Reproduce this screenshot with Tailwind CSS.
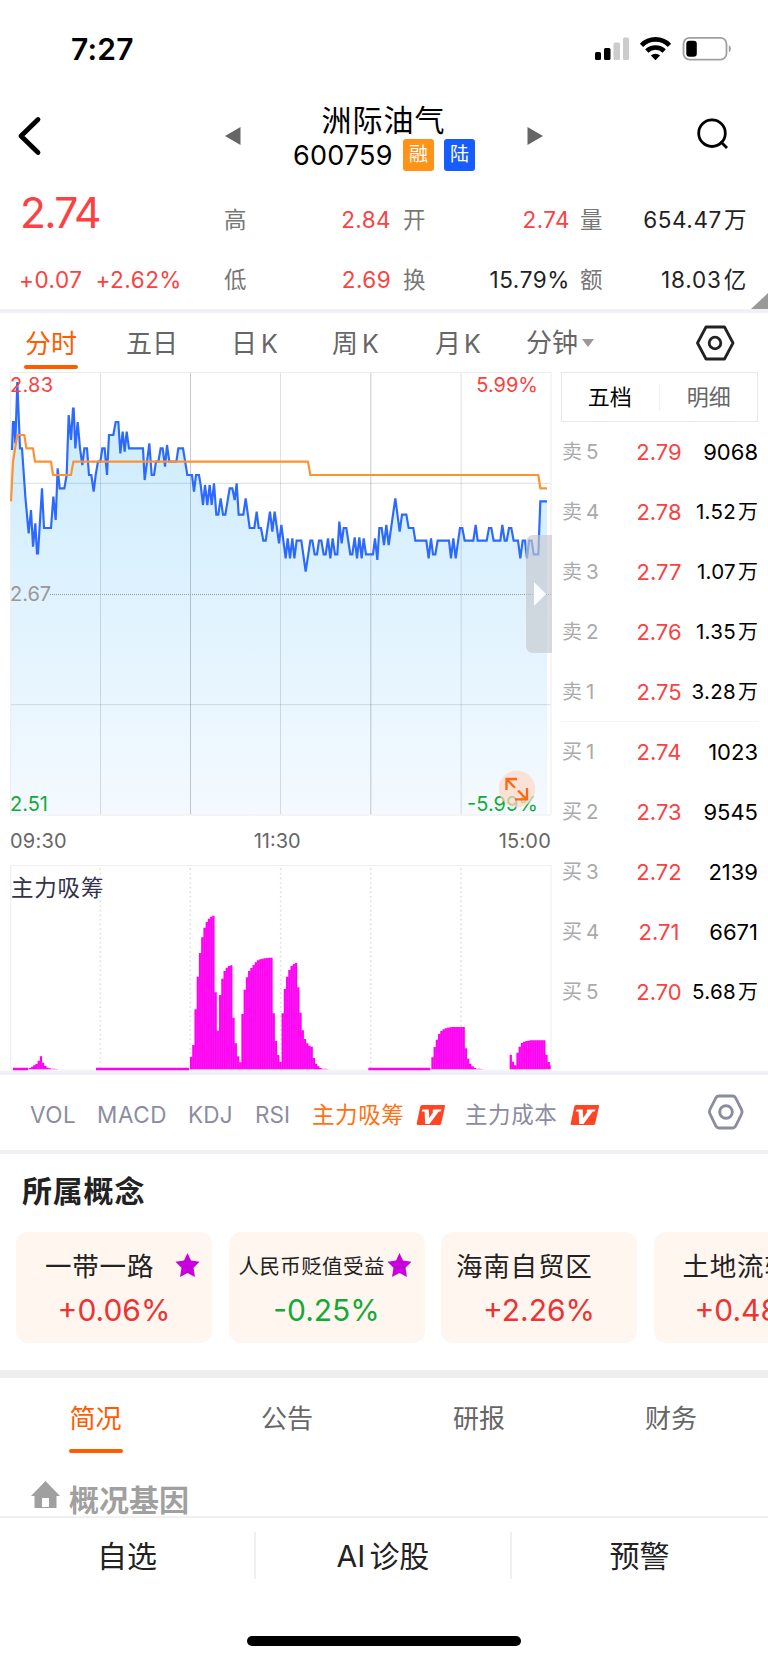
<!DOCTYPE html>
<html lang="zh-CN">
<head>
<meta charset="utf-8">
<title>洲际油气 600759</title>
<script src="https://cdn.jsdelivr.net/npm/@tailwindcss/browser@4"></script>
</head>
<body class="bg-white">
<div class="w-[768px] h-[1663px] overflow-hidden bg-white flex flex-col whitespace-nowrap text-[#222] font-['Inter','Noto_Sans_CJK_SC',sans-serif]">

  <!-- status bar -->
  <div class="h-[98px] shrink-0 flex items-center justify-between pl-[71px] pr-[36px]">
    <div class="text-[30px] leading-[30px] font-semibold text-black tracking-[0.2px]">7:27</div>
    <svg width="138" height="26" viewBox="594 36 138 26">
      <g fill="#000"><rect x="595" y="52" width="6" height="8" rx="1.5"/><rect x="604" y="48" width="6.500" height="12" rx="1.500"/></g>
      <g fill="#ccc"><rect x="613.500" y="42.500" width="6.500" height="17.500" rx="1.500"/><rect x="623" y="37.500" width="6" height="22.500" rx="1.500"/></g>
      <g fill="none" stroke="#000" stroke-width="4.600"><path d="M641.500 45.300a19.500 19.500 0 0 1 28 0"/><path d="M646.800 51a12.500 12.500 0 0 1 17.400 0"/></g>
      <path d="M655.500 60.300l-4.600-4.700a6.600 6.600 0 0 1 9.200 0z" fill="#000"/>
      <rect x="683.500" y="37.900" width="43" height="21.700" rx="6" fill="none" stroke="#a0a0a0" stroke-width="1.800"/>
      <rect x="686.300" y="40.800" width="10.500" height="16" rx="3.200" fill="#000"/>
      <path d="M728.800 45.300c2.800 1 2.800 6 0 7z" fill="#a0a0a0"/>
    </svg>
  </div>

  <!-- header -->
  <div class="h-[88px] shrink-0 flex">
    <div class="w-[220px]"><svg width="60" height="76" viewBox="0 98 60 76"><path d="M38 119.500L21 136l17 16.500" fill="none" stroke="#000" stroke-width="4.800" stroke-linecap="round" stroke-linejoin="round"/></svg></div>
    <svg width="25" height="76" viewBox="220 98 25 76"><path d="M240.500 127v18L225 136z" fill="#666"/></svg>
    <div class="w-[278px] text-black flex flex-col items-center pt-[6px]">
      <div class="text-[30px] leading-[32px] tracking-[1px] -ml-[1px]">洲际油气</div>
      <div class="flex items-center mt-[3px] h-[32px]">
        <div class="text-[27px] tracking-[0.2px] w-[110px] pt-[2px]">600759</div>
        <div class="w-[31px] h-[32px] rounded-[3px] bg-[#ff9318] text-white text-[19px] leading-[32px] text-center">融</div>
        <div class="ml-[10px] w-[31px] h-[32px] rounded-[3px] bg-[#175cff] text-white text-[19px] leading-[32px] text-center">陆</div>
      </div>
    </div>
    <svg width="245" height="76" viewBox="523 98 245 76"><path d="M527.500 127v18L543 136z" fill="#666"/><circle cx="712" cy="133.200" r="13.300" fill="none" stroke="#000" stroke-width="2.800"/><path d="M720.500 141.500l6.500 6.500" stroke="#000" stroke-width="2.800"/></svg>
  </div>

  <!-- quote summary -->
  <div class="h-[123px] shrink-0 relative text-[22.5px] leading-[30px]">
    <div class="h-[63px] flex items-center text-[#fa4242]">
      <div class="pl-[20px] w-[224px] text-[42.5px] leading-[54px] tracking-[-1.7px] -mt-[10px]">2.74</div>
      <div class="w-[80px] text-[#777] pt-[4px]">高</div><div class="w-[87px] text-right pt-[4px] tracking-[0.4px]">2.84</div>
      <div class="pl-[12px] w-[42px] text-[#777] pt-[4px]">开</div><div class="w-[137px] text-right pt-[4px] tracking-[0.4px]">2.74</div>
      <div class="pl-[10px] w-[42px] text-[#777] pt-[4px]">量</div><div class="w-[135px] text-right pt-[4px] text-[#222] tracking-[0.6px]">654.47<span class="ml-[2px]">万</span></div>
    </div>
    <div class="h-[60px] flex items-center text-[#fa4242] pt-[1px]">
      <div class="pl-[19px] w-[224px] tracking-[0.5px]">+0.07<span class="ml-[13px]">+2.62%</span></div>
      <div class="w-[80px] text-[#777]">低</div><div class="w-[87px] text-right tracking-[0.4px]">2.69</div>
      <div class="pl-[12px] w-[42px] text-[#777]">换</div><div class="w-[137px] text-right text-[#222] tracking-[0.6px]">15.79%</div>
      <div class="pl-[10px] w-[42px] text-[#777]">额</div><div class="w-[135px] text-right text-[#222] tracking-[0.8px]">18.03<span class="ml-[2px]">亿</span></div>
    </div>
    <svg class="absolute right-0 bottom-0" width="17" height="16" viewBox="0 0 17 16"><path d="M0 16L17 0v16z" fill="#999"/></svg>
  </div>
  <div class="h-[4px] shrink-0 bg-[#f0f0f6]"></div>

  <!-- period tabs -->
  <div class="h-[59px] shrink-0 flex text-[26px] leading-[62px] text-[#666]">
    <div class="w-[126px] pl-[24px] text-[#ff5c00]"><div class="w-[54px] h-[52px] text-center">分时</div><div class="w-[54px] h-[4px] rounded-full bg-[#ff5c00]"></div></div>
    <div class="w-[106px]">五日</div>
    <div class="w-[101px] -ml-[1px] mr-[1px]">日<span class="ml-[4px] text-[25px]">K</span></div>
    <div class="w-[102px] -ml-[1px] mr-[1px]">周<span class="ml-[4px] text-[25px]">K</span></div>
    <div class="w-[91px]">月<span class="ml-[3px] text-[25px]">K</span></div>
    <div class="w-[168px] flex items-center">分钟<svg class="ml-[4px]" width="12" height="8"><path d="M0 0h12L6 8z" fill="#999"/></svg></div>
    <svg class="mt-[11px]" width="42" height="38" viewBox="694 324 42 38"><path d="M706 327h18.500l8.500 16-8.500 16H706l-8.500-16z" fill="none" stroke="#222" stroke-width="2.800" stroke-linejoin="round"/><circle cx="715" cy="343" r="5.800" fill="none" stroke="#222" stroke-width="2.800"/></svg>
  </div>

  <!-- charts and order book -->
  <div class="h-[699px] shrink-0 flex pl-[10px]">
    <div class="w-[551px] flex flex-col text-[20px] leading-[24px]">
      <div class="relative h-[444px]">
        <svg class="block" width="542" height="444" viewBox="30 216 1626 1332">
          <defs><linearGradient id="area" x1="0" y1="0" x2="0" y2="1"><stop offset="0" stop-color="#c9ecfe"/><stop offset=".35" stop-color="#d9f0fe"/><stop offset="1" stop-color="#f4faff"/></linearGradient></defs>
          <path id="fill" fill="url(#area)"/>
          <g fill="none" stroke="#3c5064" stroke-opacity=".18" stroke-width="3"><path d="M301.500 217V1544M841.500 217V1544M1383.500 217V1544M32 550H1653M32 1214H1653"/><path d="M571.500 217V1544M1112.500 217V1544" stroke-opacity=".3"/></g>
          <path d="M32 217.500H1653V1545H32z" fill="none" stroke="#ececec" stroke-width="3"/>
          <path d="M150 883.500H1653" stroke="#8e9ba4" stroke-width="3" stroke-dasharray="3 3"/>
          <path id="price" fill="none" stroke="#2b69ff" stroke-width="6.500" stroke-linejoin="miter"/>
          <path id="avg" fill="none" stroke="#ff9130" stroke-width="6.500" stroke-linejoin="round"/>
        </svg>
        <div class="absolute left-0 top-[1px] text-[#fa4242] tracking-[0.3px]">2.83</div>
        <div class="absolute right-[23px] top-[1px] text-[#fa4242]">5.99%</div>
        <div class="absolute left-0 top-[210px] text-[#999]">2.67</div>
        <div class="absolute left-0 top-[420px] text-[#15aa38]">2.51</div>
        <div class="absolute right-[23px] top-[420px] text-[#15aa38]">-5.99%</div>
        <div class="absolute right-[9px] top-[163px] w-[26px] h-[118px] rounded-l-[7px] bg-[#c5c8ce]/65 flex items-center pl-[8px]"><svg width="13" height="24"><path d="M0 0l12 12L0 24z" fill="#fafdff"/></svg></div>
        <svg class="absolute left-[488px] top-[398px]" width="38" height="38" viewBox="498 770 38 38"><circle cx="517" cy="789" r="18.300" fill="#ffd7c8" fill-opacity=".72"/><path d="M506.500 790v-11H517M506.500 779l8.500 8.800M518 790.500l8.500 8.800M527 788v11.300h-12" fill="none" stroke="#fa6a14" stroke-width="2.300"/></svg>
      </div>
      <div class="h-[49px] w-[541px] flex justify-between items-center text-[#666]"><span class="tracking-[0.2px]">09:30</span><span class="-ml-[11px]">11:30</span><span class="tracking-[0.2px]">15:00</span></div>
      <div class="relative h-[206px]">
        <svg class="block" width="542" height="206" viewBox="30 45 1626 618">
          <path d="M32 660V46.500H1653V660z" fill="none" stroke="#f0f0f2" stroke-width="3.500"/>
          <path d="M301 55V655M571 55V655M842 55V655M1112 55V655M1383 55V655" stroke="#e0e0e0" stroke-width="5" stroke-dasharray="5 8.800"/>
          <path id="bars" fill="#ff00f2"/>
          <path id="seams" stroke="#ff55f6" stroke-width="1" fill="none"/>
        </svg>
        <div class="absolute left-[1px] top-[11px] text-[22.5px] tracking-[0.8px] text-[#33334a]">主力吸筹</div>
      </div>
    </div>
    <div class="w-[197px]">
      <div class="h-[50px] border border-[#e8e8e8] flex items-center text-[22px]"><div class="w-[97px] text-center text-black pr-[1px]">五档</div><div class="w-[2px] h-[27px] bg-[#f0f0f0]"></div><div class="w-[97px] text-center text-[#666]">明细</div></div>
      <div id="book" class="text-[22px] leading-[60px]"></div>
    </div>
  </div>
  <div class="h-[4px] shrink-0 bg-[#f0f0f6]"></div>

  <!-- indicators -->
  <div class="h-[75px] shrink-0 flex items-center text-[22.5px] text-[#8c8ca1] pt-[4px]">
    <div class="pl-[30px] w-[97px] tracking-[0.5px]">VOL</div><div class="w-[91px] tracking-[0.6px]">MACD</div><div class="w-[67px] tracking-[0.2px]">KDJ</div><div class="w-[57px]">RSI</div>
    <div class="w-[104px] text-[#ff7214] tracking-[0.6px]">主力吸筹</div>
    <svg width="49" height="22" viewBox="0 0 49 22"><path d="M6 1h22q1.400 0 1 1.400l-3.800 17q-.4 1.600-2 1.600H1.800Q.4 21 .7 19.600l3.600-17Q4.600 1 6 1z" fill="#ff4524"/><path d="M6.500 5.500h6.200l.6 8.500 4.200-6.500h-1.200l1-2h8.200l-1 2h-1.700L13.500 20H9.200l-.6-12.500H5.700z" fill="#fff"/></svg>
    <div class="w-[105px] tracking-[0.6px]">主力成本</div>
    <svg width="30" height="22" viewBox="0 0 30 22"><path d="M6 1h22q1.400 0 1 1.400l-3.800 17q-.4 1.600-2 1.600H1.800Q.4 21 .7 19.600l3.600-17Q4.600 1 6 1z" fill="#ff4524"/><path d="M6.500 5.500h6.200l.6 8.500 4.200-6.500h-1.200l1-2h8.200l-1 2h-1.700L13.500 20H9.200l-.6-12.500H5.700z" fill="#fff"/></svg>
    <svg class="ml-[107px] -mt-[5px]" width="38" height="38" viewBox="0 0 38 38"><path d="M12 3h13.500q2 0 3 1.700l6 11.800q1.200 2.300 0 4.600l-6 12.200q-1 1.700-3 1.700H12q-2 0-3-1.700L3 21q-1.200-2.300 0-4.600L9 4.700Q10 3 12 3z" fill="none" stroke="#8c8ca1" stroke-width="2.800"/><circle cx="19" cy="19" r="6.300" fill="none" stroke="#8c8ca1" stroke-width="2.900"/></svg>
  </div>
  <div class="h-[4px] shrink-0 bg-[#f0f0f6]"></div>

  <!-- concepts -->
  <div class="h-[78px] shrink-0 pl-[22px] pt-[14px] text-[30px] leading-[46px] font-bold tracking-[0.8px]">所属概念</div>
  <div class="h-[138px] shrink-0 flex gap-x-[16.5px] pl-[16px]">
    <div class="w-[196px] h-[111px] shrink-0 rounded-[12px] bg-[#fff6f0] pt-[17px]">
      <div class="h-[36px] flex items-center"><div class="w-[159px] pl-[29px] text-[26.5px] tracking-[0.8px]">一带一路</div><svg class="-mt-[4px]" width="25" height="24" viewBox="0 0 24 24"><path d="M12 0l3.500 7.500L24 8.800l-6 6L19.500 24 12 20l-7.500 4L6 14.800l-6-6 8.500-1.300z" fill="#c800dc"/></svg></div>
      <div class="pt-[7px] text-center text-[30px] leading-[36px] text-[#eb3434]">+0.06%</div>
    </div>
    <div class="w-[196px] h-[111px] shrink-0 rounded-[12px] bg-[#fff6f0] pt-[17px]">
      <div class="h-[36px] flex items-center"><div class="w-[158px] pl-[10px] text-[20.500px] tracking-[0.4px]">人民币贬值受益</div><svg class="-mt-[4px]" width="25" height="24" viewBox="0 0 24 24"><path d="M12 0l3.500 7.500L24 8.800l-6 6L19.500 24 12 20l-7.500 4L6 14.800l-6-6 8.500-1.300z" fill="#c800dc"/></svg></div>
      <div class="pt-[7px] text-center text-[30px] leading-[36px] text-[#15aa38]">-0.25%</div>
    </div>
    <div class="w-[196px] h-[111px] shrink-0 rounded-[12px] bg-[#fff6f0] pt-[17px]">
      <div class="h-[36px] flex items-center pl-[15px] text-[26.5px] tracking-[0.8px]">海南自贸区</div>
      <div class="pt-[7px] text-center text-[30px] leading-[36px] text-[#eb3434]">+2.26%</div>
    </div>
    <div class="w-[196px] h-[111px] shrink-0 rounded-[12px] bg-[#fff6f0] pt-[17px]">
      <div class="h-[36px] flex items-center pl-[29px] text-[26.5px] tracking-[0.8px]">土地流转</div>
      <div class="pt-[7px] text-center text-[30px] leading-[36px] text-[#eb3434]">+0.48%</div>
    </div>
  </div>
  <div class="h-[8px] shrink-0 bg-[#eee]"></div>

  <!-- info tabs -->
  <div class="h-[98px] shrink-0 grid grid-cols-4 text-[26px] leading-[82px] text-[#666] text-center">
    <div class="flex flex-col items-center text-[#ff5c00]"><div class="h-[71px] -ml-[1px]">简况</div><div class="w-[54px] h-[4px] rounded-full bg-[#ff5c00]"></div></div>
    <div class="-ml-[2px]">公告</div><div class="-ml-[2px]">研报</div><div class="-ml-[2px]">财务</div>
  </div>
  <div class="h-[40px] shrink-0 flex pl-[31px] text-[#a0a0a0]">
    <svg class="mt-[5px]" width="30" height="28" viewBox="0 0 30 28"><path fill-rule="evenodd" d="M14.500 0L29 15h-3.500v12h-22V15H0zM11 17V26h7V17z" fill="#a0a0a0"/></svg>
    <div class="pl-[8px] text-[30px] leading-[48px] font-bold">概况基因</div>
  </div>

  <!-- bottom actions -->
  <div class="h-[147px] shrink-0 border-t-2 border-[#f0f0f0] flex flex-col items-center bg-white">
    <div class="w-full h-[118px] pt-[14px] grid grid-cols-3 text-center text-[30px] leading-[48px]">
      <div class="h-[47px] border-r-2 border-[#f0f0f0]">自选</div><div class="h-[47px] border-r-2 border-[#f0f0f0]">AI<span class="ml-[4px]">诊股</span></div><div class="h-[47px] -ml-[1px]">预警</div>
    </div>
    <div class="w-[274px] h-[10px] rounded-full bg-black"></div>
  </div>
</div>

<script>
// Chart coordinates are in thirds of a pixel.
const price = `36,450 39,366 42,366 46,430 52,246 60,445 66,445 76,590 86,700 93,630 99,740 106,670 111,760 114,760 126,565 132,684 153,684 160,590 167,660 173,505 179,565 193,565 200,525 206,345 213,420 219,326 221,326 226,445 233,366 240,445 247,495 253,445 261,445 267,525 274,525 281,575 287,525 294,485 301,485 307,445 314,445 321,525 327,405 340,405 347,366 355,366 361,460 368,395 374,455 380,395 387,445 429,445 434,540 448,430 455,525 462,525 468,485 475,485 482,445 488,445 495,500 501,435 508,485 529,485 535,445 549,445 562,525 576,525 582,575 588,525 597,525 602,555 609,615 615,555 622,615 629,555 635,615 642,550 649,644 655,644 662,595 669,644 676,644 689,565 697,565 704,600 710,550 716,644 730,644 737,595 749,684 763,684 770,635 776,684 783,684 790,722 797,722 810,635 817,695 824,635 837,730 844,675 857,775 863,715 870,775 877,715 883,775 890,722 904,722 917,815 931,722 937,722 944,763 951,763 957,722 964,722 971,763 977,763 984,715 991,775 998,715 1005,763 1012,763 1018,665 1025,730 1031,684 1039,684 1051,763 1057,763 1064,712 1071,775 1078,712 1085,775 1091,715 1098,763 1119,763 1125,715 1132,780 1138,684 1145,684 1152,735 1159,675 1166,735 1186,595 1199,695 1206,644 1219,644 1226,684 1240,684 1246,722 1279,722 1286,775 1293,715 1299,763 1306,763 1313,722 1347,722 1353,775 1360,715 1367,775 1380,684 1387,684 1394,722 1420,722 1427,675 1433,722 1460,722 1467,684 1474,684 1481,722 1501,722 1507,675 1514,722 1520,722 1527,684 1534,684 1541,722 1554,722 1561,775 1568,722 1575,722 1581,775 1587,722 1595,722 1601,763 1615,763 1621,604 1641,604`;
const avg = `33,604 39,485 52,405 73,405 79,445 99,445 105,485 153,485 159,525 213,525 220,485 924,485 931,525 1615,525 1621,565 1641,565`;
const set = (id, d) => document.getElementById(id).setAttribute('d', d);
set('price', 'M' + price);
set('avg', 'M' + avg);
set('fill', 'M33,1544 L33,604 L' + price + ' L1641,1544z');

// Runs of volume bars: start x, then the top of each bar.
const runs = [
  [86, [654,650,646,642,632,619,638,648,653,655,656,656.5,657]],
  [570, [620,585,478,380,309,262,233,216,206,200,197,427,542,435,386,363,353,348,346,503,580,619,637,492,419,382,363,354,345,337,331,328,326,325,324,323,323,490,573,615,636,490,417,380,360,348,342,339,412,488,541,567,580,587,590,624,641,649,654,656,656.5,657]],
  [1294, [622,591,569,552,543,538,535,533,532,531,531,531,531,531,531,595,626,641,649,654,656,656.5,657]],
  [1529, [614,635,646,608,590,579,575,573,572,571,571,571,571,571,571,571,614,636,646]]
];
const step = 6.7;
let bars = 'M39 653H84V661H39z M288 653H567V661H288z M1105 653H1291V661H1105z', seams = '';
for (const [x, tops] of runs) tops.forEach((t, i) => {
  const l = x + i * step, r = Math.min(l + step, 1652);
  bars += `M${l} ${t}H${r}V658H${l}z`;
  if (i && t < 640) seams += `M${l} ${Math.max(t, tops[i-1])}V658`;
});
set('bars', bars);
set('seams', seams);

const book = [['卖',5,'2.79','9068'],['卖',4,'2.78','1.52万'],['卖',3,'2.77','1.07万'],['卖',2,'2.76','1.35万'],['卖',1,'2.75','3.28万'],['买',1,'2.74','1023'],['买',2,'2.73','9545'],['买',3,'2.72','2139'],['买',4,'2.71','6671'],['买',5,'2.70','5.68万']];
document.getElementById('book').innerHTML = book.map(([s, n, p, v], i) =>
  `<div class="flex h-[60px] ${i === 4 ? 'border-b border-[#f4f4f4]' : ''}"><div class="w-[62px] pl-[1px] text-[20px] text-[#aaa]">${s}<span class="ml-[4px] text-[20.5px]">${n}</span></div><div class="w-[70px] text-center pl-[2px] text-[#fa4242] shrink-0">${p}</div><div class="w-[65px] flex justify-end text-black">${v.endsWith('万') ? `<span class="text-[20.5px] tracking-[0.3px]">${v.slice(0, -1)}</span><span class="ml-[2px] text-[20px]">万</span>` : v}</div></div>`).join('');
</script>
</body>
</html>
